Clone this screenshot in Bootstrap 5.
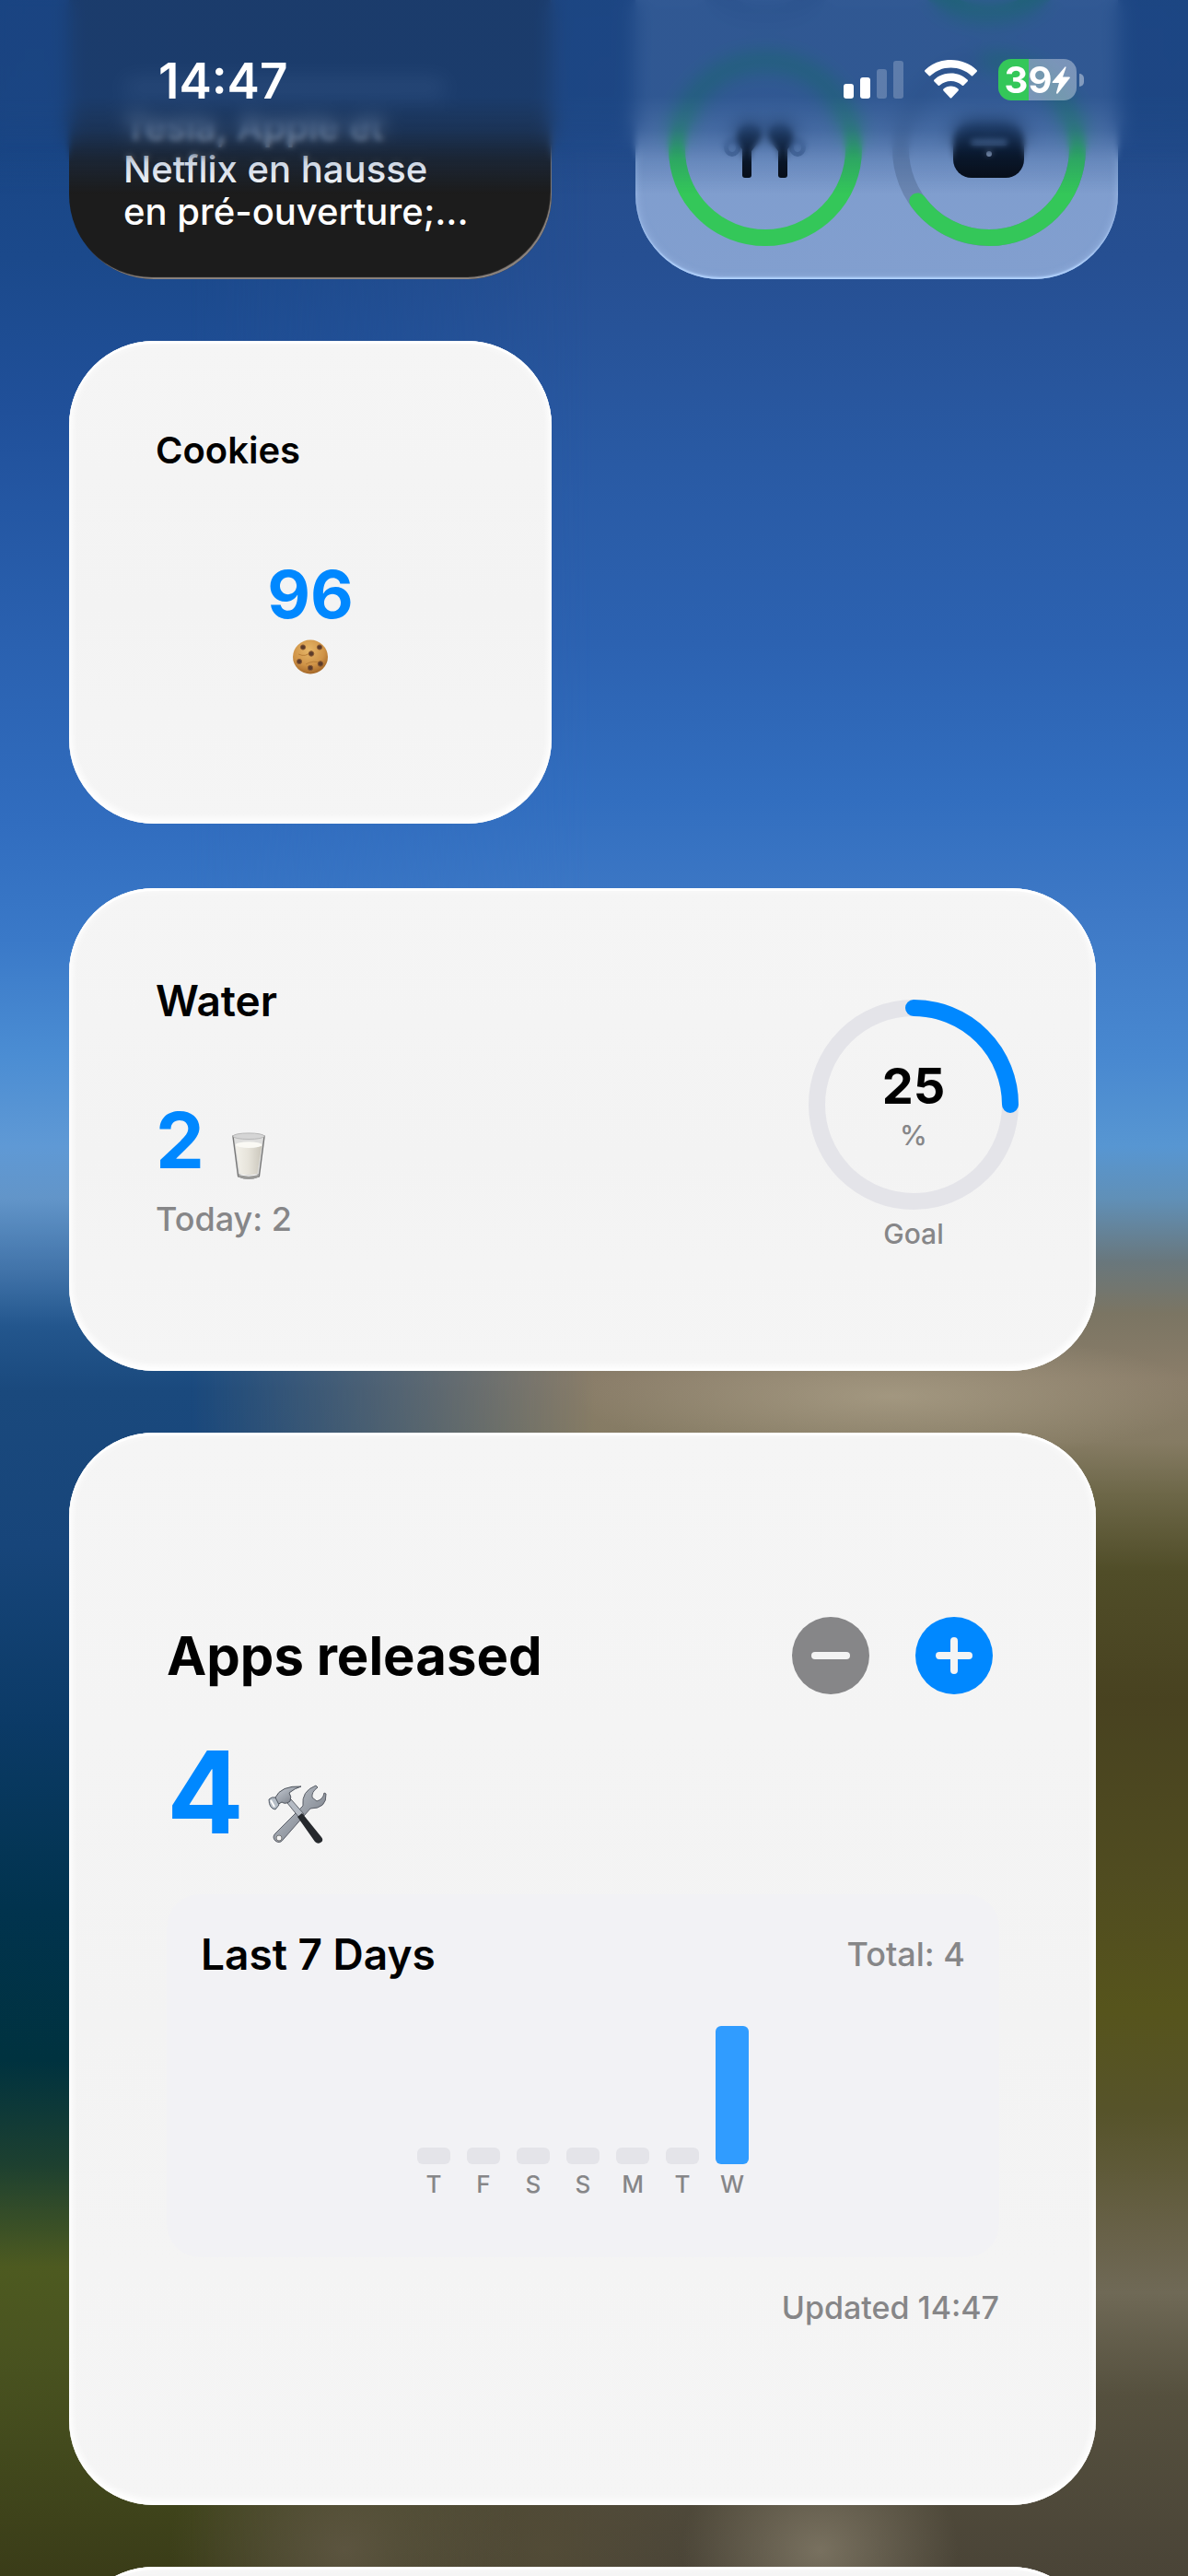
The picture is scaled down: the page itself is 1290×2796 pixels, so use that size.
<!DOCTYPE html>
<html lang="en">
<head>
<meta charset="utf-8">
<meta name="viewport" content="width=device-width, initial-scale=1">
<title>Widgets</title>
<link href="https://cdn.jsdelivr.net/npm/bootstrap@5.3.0/dist/css/bootstrap.min.css" rel="stylesheet">
<style>
  body { font-family: Inter, "Liberation Sans", sans-serif; color: #000; background: #1b4a80; }
  .screen { height: 100vh; isolation: isolate; }

  /* wallpaper: sky over hills */
  .wall, .wall-hills, .wall-foot { z-index: -1; }
  .wall {
    background: linear-gradient(180deg, #17427f 0%, #1b498b 10%, #20509a 16%, #2a61b0 25%, #316dbf 32%, #3a79c8 36.5%,
      #4b8dd3 41%, #5f99d5 44.5%, #6295c9 46.5%, #3f71a7 49.5%, #23568d 51.5%, #1a497d 54%, #17457a 60%, #0b3a66 67%,
      #01334e 74%, #00323f 80%, #1d4030 84%, #4d5a20 88%, #4a5420 91%, #434a1d 95%, #3a3c18 100%);
  }
  .wall-hills {
    background: linear-gradient(180deg, #234a86 0%, #264f92 10%, #295aa4 18%, #2c62b1 25%, #326ebf 31%, #3e79c6 35.5%,
      #4888d0 41%, #5796d2 44.5%, #6090b8 46.5%, #69777c 49%, #7b7563 51%, #8a7d69 53.5%, #857b63 56%, #6d6748 58%,
      #504d28 61%, #484220 66%, #504c20 73%, #56541c 78%, #56532a 82%, #69624a 87%, #6f6956 89%, #55503e 93%, #4a4437 100%);
    -webkit-mask-image: linear-gradient(90deg, transparent 16%, #000 50%);
    mask-image: linear-gradient(90deg, transparent 16%, #000 50%);
  }
  .wall-foot {
    background:
      radial-gradient(340px 70px at 75% 54.2%, rgba(171,160,136,.75), transparent),
      radial-gradient(150px 130px at 69% 99%, rgba(128,120,102,.85), transparent),
      radial-gradient(190px 170px at 29% 99%, rgba(98,89,70,.8), transparent),
      radial-gradient(160px 160px at 46% 99%, rgba(83,76,55,.9), transparent);
  }

  /* widget tiles */
  .tile { border-radius: 92px; min-height: 524px; background: linear-gradient(180deg, #f5f5f5, #f3f3f3 55%, #f5f5f5); box-shadow: inset 0 3px 0 #fff, inset 0 -4px 8px 1px #fff, inset 0 0 12px #fff; }
  .rows { padding: 0 76px 67px 75px; }
  .rows-loose { padding-bottom: 70px; }
  .rows-wide { padding: 0 100px 67px 75px; }
  .pair { gap: 91px; grid-template-columns: repeat(2, minmax(0, 1fr)); }
  .tile-top { height: 303px; border-radius: 0 0 92px 92px; }
  .news { background: #1c1c1c; box-shadow: inset -2px -3px 1px -1px #8d8580; padding: 0 58px 50px 59px; font-size: 40px; line-height: 46px; font-weight: 500; }
  .faded-line { width: 350px; height: 20px; margin-bottom: 10px; border-radius: 10px; background: #555; }
  .power { background: linear-gradient(180deg, #7b9bcd, #829fcf); box-shadow: inset 0 -3px 2px -1px #b3d4ff, inset 0 0 10px rgba(170,200,245,.7); }
  .cookie-tile { padding: 95px 94px; }
  .t-40 { font-size: 40px; line-height: 48px; font-weight: 600; }
  .t-46 { font-size: 46px; line-height: 56px; font-weight: 600; }
  .t-58 { font-size: 58px; line-height: 84px; font-weight: 700; }
  .n-54 { font-size: 54px; line-height: 62px; font-weight: 700; }
  .n-72 { font-size: 72px; line-height: 80px; font-weight: 700; }
  .n-84 { font-size: 84px; line-height: 96px; font-weight: 700; }
  .n-124 { font-size: 124px; line-height: 128px; font-weight: 700; }
  .s-36 { font-size: 36px; line-height: 44px; font-weight: 500; }
  .s-34 { font-size: 34px; line-height: 40px; font-weight: 500; }
  .s-30 { font-size: 30px; line-height: 36px; font-weight: 500; }
  .s-26 { font-size: 26px; line-height: 30px; font-weight: 500; }
  .tint { color: #0088ff; }
  .dim { color: #868688; }
  .water-tile { padding: 94px 84px 0 94px; }
  .goal { padding-top: 27px; }
  .goal-ring { width: 228px; height: 228px; }
  .count-water { margin-top: 76px; gap: 30px; }
  .count-apps { margin-top: 42px; gap: 26px; }
  .today { margin-top: 15px; }
  .apps-tile { padding: 200px 105px 194px 106px; }
  .pad-btns { gap: 50px; padding-right: 7px; }
  .round-btn { width: 84px; height: 84px; }
  .panel { background: #f2f2f5; border-radius: 36px; padding: 37px 37px 64px; margin-top: 47px; }
  .updated { margin-top: 35px; }
  .bars { gap: 18px; padding-top: 50px; }
  .day { width: 36px; }
  .stick { height: 18px; border-radius: 6px; background: #e4e4e9; margin-bottom: 7px; }
  .stick-on { height: 150px; background: #309cff; }
  .gap-head { margin-top: 92px; }
  .cookie-icon { margin-top: 9px; }

  /* frosted strip under the clock */
  .overlay { z-index: 5; }
  .frost, .frost-deep, .tint-strip { height: 210px; }
  .frost { backdrop-filter: blur(3px); -webkit-mask-image: linear-gradient(180deg, #000 74%, transparent 84%); mask-image: linear-gradient(180deg, #000 74%, transparent 84%); }
  .frost-deep { backdrop-filter: blur(10px); -webkit-mask-image: linear-gradient(180deg, #000 62%, transparent 79%); mask-image: linear-gradient(180deg, #000 62%, transparent 79%); }
  .tint-strip { background: linear-gradient(180deg, rgba(27,69,130,.78) 0 50%, rgba(27,69,130,.58) 67%, rgba(27,69,130,.25) 82%, rgba(27,69,130,0)); }
  .status { padding: 56px 113px 0 172px; height: 120px; }
  .status-icons { padding-top: 8px; }
  .glyphs { gap: 23px; }
  .clock { font-size: 53px; line-height: 64px; font-weight: 600; }
  .pill { width: 85px; height: 45px; border-radius: 14px; background: linear-gradient(90deg, #34c759 39%, rgba(255,255,255,.36) 39%); font-size: 40px; line-height: 45px; font-weight: 700; }
  .nub { width: 5px; height: 14px; border-radius: 0 5px 5px 0; background: rgba(255,255,255,.4); margin-left: 3px; }
</style>
</head>
<body>
<div class="screen position-relative overflow-hidden">
  <div class="wall position-absolute top-0 start-0 w-100 h-100"></div>
  <div class="wall-hills position-absolute top-0 start-0 w-100 h-100"></div>
  <div class="wall-foot position-absolute top-0 start-0 w-100 h-100"></div>

  <div class="overlay position-absolute top-0 start-0 w-100 text-white">
    <div class="frost-deep position-absolute top-0 start-0 w-100"></div>
    <div class="frost position-absolute top-0 start-0 w-100"></div>
    <div class="tint-strip position-absolute top-0 start-0 w-100"></div>
    <header class="status position-relative d-flex justify-content-between align-items-start">
      <div class="clock">14:47</div>
      <div class="status-icons d-flex align-items-center">
        <div class="glyphs d-flex align-items-center">
        <svg width="65" height="45" viewBox="0 0 65 45" fill="#fff" aria-label="Signal">
          <rect x="0" y="27" width="11" height="16" rx="3"/><rect x="18" y="20" width="11" height="23" rx="3"/>
          <g opacity=".22"><rect x="36" y="11" width="11" height="32" rx="3"/><rect x="54" y="2" width="11" height="41" rx="3"/></g>
        </svg>
        <svg width="57" height="45" viewBox="0 0 57 45" fill="#fff" aria-label="Wi-Fi">
          <path d="M28.500 1 C39.500 1 49.500 5 56.500 12 Q57.500 13 56.500 14 L52.500 18 Q51.500 19 50.500 18 C44.500 12.500 37 9.500 28.500 9.500 S12.500 12.500 6.500 18 Q5.500 19 4.500 18 L.5 14 Q-.5 13 .5 12 C7.500 5 17.500 1 28.500 1Z"/>
          <path d="M28.500 15.500 C35.500 15.500 41.500 18 46.500 22.500 Q47.500 23.500 46.500 24.500 L42.500 28.500 Q41.500 29.500 40.500 28.500 C37 25.500 33 24 28.500 24 S20 25.500 16.500 28.500 Q15.500 29.500 14.500 28.500 L10.500 24.500 Q9.500 23.500 10.500 22.500 C15.500 18 21.500 15.500 28.500 15.500Z"/>
          <path d="M28.500 29.500 C31.500 29.500 34.500 30.500 36.500 32.500 Q37.500 33.500 36.500 34.500 L29.500 42 Q28.500 43 27.500 42 L20.500 34.500 Q19.500 33.500 20.500 32.500 C22.500 30.500 25.500 29.500 28.500 29.500Z"/>
        </svg>
        <div class="pill d-flex align-items-center justify-content-center"><span>39</span>
          <svg width="20" height="30" viewBox="0 0 20 30" fill="#fff"><path d="M14.500 .5 1 16.500Q0 18 1.500 18H8L5 28.500Q5 30.500 6.500 29.500L19.500 13Q20.500 11.500 19 11.500H12L15.500 1.500Q15.500-.5 14.500 .5Z"/></svg>
        </div>
        </div>
        <div class="nub"></div>
      </div>
    </header>
  </div>

  <main>
    <section class="rows pair d-grid">
      <a href="#" class="tile-top news d-flex flex-column justify-content-end overflow-hidden text-decoration-none text-white">
        <span class="faded-line"></span>
        <span class="text-nowrap">Tesla, Apple et</span>
        <span class="text-nowrap">Netflix en hausse</span>
        <span class="text-nowrap">en pré-ouverture;...</span>
      </a>
      <div class="tile-top power overflow-hidden">
        <svg class="d-block mx-auto" width="524" height="303" viewBox="0 0 524 303" aria-label="Batteries">
          <g fill="none" stroke-width="18" stroke-linecap="round">
            <circle cx="141" cy="-81" r="96" stroke="#6b8abb"/>
            <circle cx="384" cy="-81" r="96" stroke="#34c759"/>
            <circle cx="141" cy="162" r="96" stroke="#34c759"/>
            <circle cx="384" cy="162" r="96" stroke="#6b86b1"/>
            <circle cx="384" cy="162" r="96" stroke="#34c759" pathLength="100" stroke-dasharray="65 100" transform="rotate(-90 384 162)"/>
          </g>
          <g fill="#05080d">
            <path d="M116 168V162Q106 152 112 140Q120 130 132 136Q142 144 132 156L126 164V168Z"/>
            <path d="M165 168V162Q175 152 169 140Q161 130 149 136Q139 144 149 156L155 164V168Z"/>
            <rect x="116" y="166" width="10" height="27" rx="3"/><rect x="155" y="166" width="10" height="27" rx="3"/>
            <rect x="345" y="132" width="77" height="61" rx="20"/>
          </g>
          <g fill="#4a6796"><ellipse cx="105" cy="160" rx="9" ry="10"/><ellipse cx="176" cy="160" rx="9" ry="10"/></g>
          <g fill="#7f9dcd"><ellipse cx="105" cy="160" rx="4" ry="5"/><ellipse cx="176" cy="160" rx="4" ry="5"/></g>
          <rect x="364" y="151" width="40" height="7" rx="3" fill="#6b83a7"/>
          <circle cx="384" cy="167" r="3" fill="#b8c6dc"/>
        </svg>
      </div>
    </section>

    <section class="rows rows-loose pair d-grid">
      <article class="tile cookie-tile">
        <h2 class="t-40 m-0">Cookies</h2>
        <div class="gap-head text-center tint n-72">96</div>
        <svg class="cookie-icon d-block mx-auto" width="38" height="38" viewBox="0 0 38 38" aria-label="Cookie">
          <defs><radialGradient id="ck" cx=".45" cy=".3" r=".75"><stop offset="0" stop-color="#e6b668"/><stop offset=".6" stop-color="#cf9347"/><stop offset="1" stop-color="#9c5f22"/></radialGradient></defs>
          <ellipse cx="19" cy="19" rx="19" ry="18.500" fill="url(#ck)"/>
          <path d="M6 16Q14 20 20 13M14 27Q22 22 31 26" stroke="#b97f38" fill="none"/>
          <g fill="#5a3b2b" stroke="#8a5a33" stroke-width="1"><circle cx="11" cy="8.500" r="2.600"/><circle cx="29" cy="8.500" r="2.600"/><circle cx="20" cy="15.500" r="2.700"/><circle cx="7" cy="24" r="2.600"/><circle cx="30" cy="26.500" r="2.800"/><circle cx="19" cy="31" r="2.700"/></g>
        </svg>
      </article>
    </section>

    <section class="rows-wide">
      <article class="tile water-tile d-flex justify-content-between">
        <div>
          <h2 class="t-46 m-0">Water</h2>
          <div class="count-water d-flex align-items-end">
            <span class="n-84 tint">2</span>
            <svg class="mb-1" width="36" height="54" viewBox="0 0 38 54" aria-label="Glass of milk">
              <defs><linearGradient id="mk"><stop offset="0" stop-color="#f3f1ea"/><stop offset=".5" stop-color="#e6e3da"/><stop offset="1" stop-color="#cbc7bc"/></linearGradient></defs>
              <path d="M1 4 7 50Q19 55 31 50L37 4Z" fill="#dededd" stroke="#777" stroke-width="1.500"/>
              <path d="M4 15 9 47Q19 50 29 47L34 15Q19 20 4 15Z" fill="url(#mk)"/>
              <ellipse cx="19" cy="14" rx="15" ry="3.500" fill="#faf9f4"/>
              <ellipse cx="19" cy="4" rx="18" ry="3.500" fill="#d5d5d5" stroke="#b5b5b5"/>
              <path d="M7.500 47Q19 51 30.500 47L30 51Q19 56 8 51Z" fill="#9a9a98"/><path d="M9 48Q19 51 29 48" stroke="#fff" fill="none"/>
            </svg>
          </div>
          <div class="today s-36 dim">Today: 2</div>
        </div>
        <div class="goal text-center">
          <div class="goal-ring position-relative d-flex flex-column justify-content-center">
            <svg class="position-absolute top-0 start-0" width="228" height="228" viewBox="0 0 228 228" fill="none" stroke-width="18" stroke-linecap="round" aria-label="Goal progress">
              <circle cx="114" cy="114" r="105" stroke="#e4e4e9"/>
              <circle cx="114" cy="114" r="105" stroke="#0088ff" pathLength="100" stroke-dasharray="25 100" transform="rotate(-90 114 114)"/>
            </svg>
            <span class="n-54">25</span>
            <span class="s-30 dim mt-1">%</span>
          </div>
          <div class="s-30 dim mt-2">Goal</div>
        </div>
      </article>
    </section>

    <section class="rows-wide">
      <article class="tile apps-tile">
        <div class="d-flex justify-content-between align-items-center">
          <h2 class="t-58 m-0">Apps released</h2>
          <div class="pad-btns d-flex">
            <button type="button" class="round-btn btn p-0 border-0 rounded-circle" aria-label="Decrease">
              <svg class="d-block" width="84" height="84" viewBox="0 0 84 84"><circle cx="42" cy="42" r="42" fill="#868688"/><path d="M25 42H59" stroke="#f4f4f4" stroke-width="8" stroke-linecap="round"/></svg>
            </button>
            <button type="button" class="round-btn btn p-0 border-0 rounded-circle" aria-label="Increase">
              <svg class="d-block" width="84" height="84" viewBox="0 0 84 84"><circle cx="42" cy="42" r="42" fill="#0088ff"/><path d="M26 42H58M42 26V58" stroke="#f4f4f4" stroke-width="8" stroke-linecap="round"/></svg>
            </button>
          </div>
        </div>
        <div class="count-apps d-flex align-items-end">
          <span class="n-124 tint">4</span>
          <svg class="mb-2" width="64" height="64" viewBox="0 0 64 64" aria-label="Hammer and wrench">
            <defs><linearGradient id="st" x2="1" y2="1"><stop offset="0" stop-color="#c9ced6"/><stop offset=".5" stop-color="#9aa0a9"/><stop offset="1" stop-color="#686b73"/></linearGradient></defs>
            <path d="M8 53 38 23Q36 7 52 1L54 3Q47 8 48 14L53 18Q60 16 61 9L63 10Q64 26 46 26L17 59Q13 65 8 61Q4 57 8 53Z" fill="url(#st)" stroke="#5c6069"/>
            <circle cx="12" cy="58" r="3" fill="#f4f4f4" stroke="#777"/>
            <path d="M21 20 25 16 39 32 34 36Z" fill="#b4bac3" stroke="#5f636b"/>
            <path d="M32 35 37 31 58 57Q61 61 57 63Q54 65 51 62Z" fill="#26292d"/>
            <path d="M8 14Q14 1 36 2Q29 4 23 9Q26 13 24 18Q19 22 15 19L10 22Z" fill="url(#st)" stroke="#4e545d"/>
            <path d="M1 16Q4 13 8 14L12 22 8 27Q1 26 1 16Z" fill="#b5bdc6" stroke="#525a64"/><path d="M3 17 7 24" stroke="#fff" stroke-width="2"/>
          </svg>
        </div>
        <div class="panel">
          <div class="d-flex justify-content-between align-items-center">
            <h3 class="t-46 m-0">Last 7 Days</h3>
            <span class="s-36 dim">Total: 4</span>
          </div>
          <div class="bars d-flex justify-content-center align-items-end text-center s-26 dim">
            <div class="day"><div class="stick"></div>T</div>
            <div class="day"><div class="stick"></div>F</div>
            <div class="day"><div class="stick"></div>S</div>
            <div class="day"><div class="stick"></div>S</div>
            <div class="day"><div class="stick"></div>M</div>
            <div class="day"><div class="stick"></div>T</div>
            <div class="day"><div class="stick stick-on"></div>W</div>
          </div>
        </div>
        <div class="updated s-34 dim text-end">Updated 14:47</div>
      </article>
    </section>

    <section class="rows-wide"><article class="tile"></article></section>
  </main>
</div>
<script src="https://cdn.jsdelivr.net/npm/bootstrap@5.3.0/dist/js/bootstrap.bundle.min.js"></script>
</body>
</html>
